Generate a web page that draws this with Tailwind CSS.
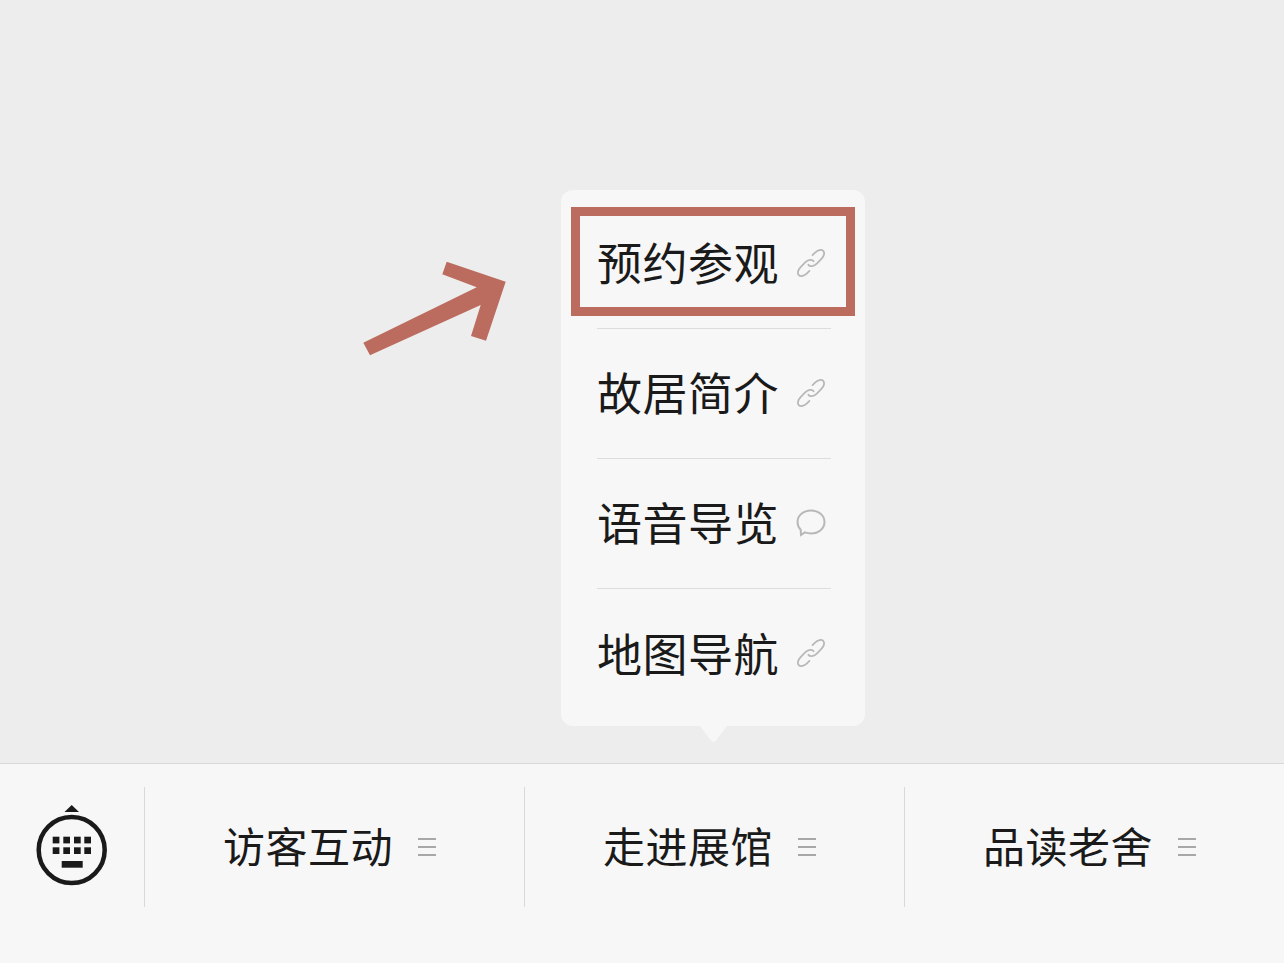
<!DOCTYPE html>
<html lang="zh-CN">
<head>
  <meta charset="UTF-8" />
  <title>菜单</title>
  <script src="https://cdn.jsdelivr.net/npm/@tailwindcss/browser@4"></script>
</head>
<body class="w-[1284px] h-[963px] overflow-hidden bg-[#ededed] font-['Noto_Sans_CJK_SC',sans-serif] font-normal text-[#1a1a1a]">
  <div class="relative w-[1284px] h-[963px] flex flex-col">
    <main class="relative h-[763px]">
      <!-- arrow -->
      <svg class="absolute left-0 top-0" width="1284" height="763" viewBox="0 0 1284 763">
        <polygon fill="#bc6c5e" points="446.7,261.7 505.7,281.7 486,340.7 471,336 480.7,305 370,355.3 363.3,342.7 476.7,287.3 442.3,274.3"/>
      </svg>

      <!-- popup menu -->
      <div class="absolute left-[561px] top-[190px] w-[304px] h-[536px] rounded-[12px] bg-[#f7f7f7] pt-[9px]">
        <div class="ml-[36px] w-[234px] h-[130px] pb-[2px] border-b border-[#dddddd] flex items-center">
          <span class="w-[199px] pb-[2px] text-[45px] tracking-[0.5px] leading-none whitespace-nowrap">预约参观</span>
          <svg width="30" height="30" viewBox="0 0 30 30" fill="none" stroke="#b8b8b8" stroke-width="1.800" stroke-linecap="round">
            <g transform="translate(15 15) rotate(-45) scale(1.440 .9) rotate(45) translate(-12 -12)">
              <path vector-effect="non-scaling-stroke" d="M10 13a5 5 0 0 0 7.540.540l3-3a5 5 0 0 0-7.070-7.070l-1.720 1.710"/>
              <path vector-effect="non-scaling-stroke" d="M14 11a5 5 0 0 0-7.540-.540l-3 3a5 5 0 0 0 7.070 7.070l1.710-1.710"/>
            </g>
          </svg>
        </div>
        <div class="ml-[36px] w-[234px] h-[130px] pb-[2px] border-b border-[#dddddd] flex items-center">
          <span class="w-[199px] pb-[2px] text-[45px] tracking-[0.5px] leading-none whitespace-nowrap">故居简介</span>
          <svg width="30" height="30" viewBox="0 0 30 30" fill="none" stroke="#b8b8b8" stroke-width="1.800" stroke-linecap="round">
            <g transform="translate(15 15) rotate(-45) scale(1.440 .9) rotate(45) translate(-12 -12)">
              <path vector-effect="non-scaling-stroke" d="M10 13a5 5 0 0 0 7.540.540l3-3a5 5 0 0 0-7.070-7.070l-1.720 1.710"/>
              <path vector-effect="non-scaling-stroke" d="M14 11a5 5 0 0 0-7.540-.540l-3 3a5 5 0 0 0 7.070 7.070l1.710-1.710"/>
            </g>
          </svg>
        </div>
        <div class="ml-[36px] w-[234px] h-[130px] pb-[2px] border-b border-[#dddddd] flex items-center">
          <span class="w-[199px] pb-[2px] text-[45px] tracking-[0.5px] leading-none whitespace-nowrap">语音导览</span>
          <svg width="30" height="30" viewBox="0 0 30 30" fill="none" stroke="#b8b8b8" stroke-width="2">
            <path d="M15 2.500c7.600 0 13.500 4.900 13.500 11.500S22.600 25.500 15 25.500c-2.300 0-4.300-.4-6.200-1.100L5 27l-.3-5.300C2.600 19.600 1.500 17 1.500 14 1.500 7.400 7.400 2.500 15 2.500z"/>
          </svg>
        </div>
        <div class="ml-[36px] w-[234px] h-[130px] pb-[2px] flex items-center">
          <span class="w-[199px] pb-[2px] text-[45px] tracking-[0.5px] leading-none whitespace-nowrap">地图导航</span>
          <svg width="30" height="30" viewBox="0 0 30 30" fill="none" stroke="#b8b8b8" stroke-width="1.800" stroke-linecap="round">
            <g transform="translate(15 15) rotate(-45) scale(1.440 .9) rotate(45) translate(-12 -12)">
              <path vector-effect="non-scaling-stroke" d="M10 13a5 5 0 0 0 7.540.540l3-3a5 5 0 0 0-7.070-7.070l-1.720 1.710"/>
              <path vector-effect="non-scaling-stroke" d="M14 11a5 5 0 0 0-7.540-.540l-3 3a5 5 0 0 0 7.070 7.070l1.710-1.710"/>
            </g>
          </svg>
        </div>
        <!-- caret -->
        <svg class="absolute left-[139px] top-[536px]" width="27" height="17" viewBox="0 0 27 17">
          <path d="M0 0H27L16 14.500Q13.500 17 11 14.500Z" fill="#f7f7f7"/>
        </svg>
        <!-- highlight around first item -->
        <div class="absolute left-[10px] top-[17px] w-[284px] h-[109px] border-[9px] border-[#bc6c5e]"></div>
      </div>
    </main>

    <!-- bottom bar -->
    <footer class="h-[200px] bg-[#f7f7f7] border-t border-[#d9d9d9] pt-[23px] flex items-start">
      <div class="w-[145px] h-[120px] border-r border-[#d9d9d9] shrink-0 relative">
        <svg class="absolute left-0 top-0" width="144" height="120" viewBox="0 787 144 120">
          <path d="M71.700 805L79 812H64.500Z" fill="#1a1a1a"/>
          <circle cx="71.700" cy="850" r="33" fill="none" stroke="#1a1a1a" stroke-width="4.500"/>
          <g fill="#1a1a1a">
            <rect x="52.700" y="836.700" width="6.700" height="6.700"/>
            <rect x="63.300" y="836.700" width="6.700" height="6.700"/>
            <rect x="74" y="836.700" width="6.700" height="6.700"/>
            <rect x="84.300" y="836.700" width="6.700" height="6.700"/>
            <rect x="52.700" y="847.300" width="6.700" height="6.700"/>
            <rect x="63.300" y="847.300" width="6.700" height="6.700"/>
            <rect x="74" y="847.300" width="6.700" height="6.700"/>
            <rect x="84.300" y="847.300" width="6.700" height="6.700"/>
            <rect x="61.700" y="861" width="21" height="6.700"/>
          </g>
        </svg>
      </div>
      <div class="w-[380px] h-[120px] border-r border-[#d9d9d9] shrink-0 flex items-center pl-[78px]">
        <span class="w-[195px] pb-[4px] text-[42px] tracking-[0.5px] leading-none whitespace-nowrap">访客互动</span>
        <span class="w-[18px] flex flex-col gap-[6px]">
          <i class="block h-[2px] bg-[#a8a8a8]"></i><i class="block h-[2px] bg-[#a8a8a8]"></i><i class="block h-[2px] bg-[#a8a8a8]"></i>
        </span>
      </div>
      <div class="w-[380px] h-[120px] border-r border-[#d9d9d9] shrink-0 flex items-center pl-[78px]">
        <span class="w-[195px] pb-[4px] text-[42px] tracking-[0.5px] leading-none whitespace-nowrap">走进展馆</span>
        <span class="w-[18px] flex flex-col gap-[6px]">
          <i class="block h-[2px] bg-[#a8a8a8]"></i><i class="block h-[2px] bg-[#a8a8a8]"></i><i class="block h-[2px] bg-[#a8a8a8]"></i>
        </span>
      </div>
      <div class="w-[379px] h-[120px] shrink-0 flex items-center pl-[78px]">
        <span class="w-[195px] pb-[4px] text-[42px] tracking-[0.5px] leading-none whitespace-nowrap">品读老舍</span>
        <span class="w-[18px] flex flex-col gap-[6px]">
          <i class="block h-[2px] bg-[#a8a8a8]"></i><i class="block h-[2px] bg-[#a8a8a8]"></i><i class="block h-[2px] bg-[#a8a8a8]"></i>
        </span>
      </div>
    </footer>
  </div>
</body>
</html>
